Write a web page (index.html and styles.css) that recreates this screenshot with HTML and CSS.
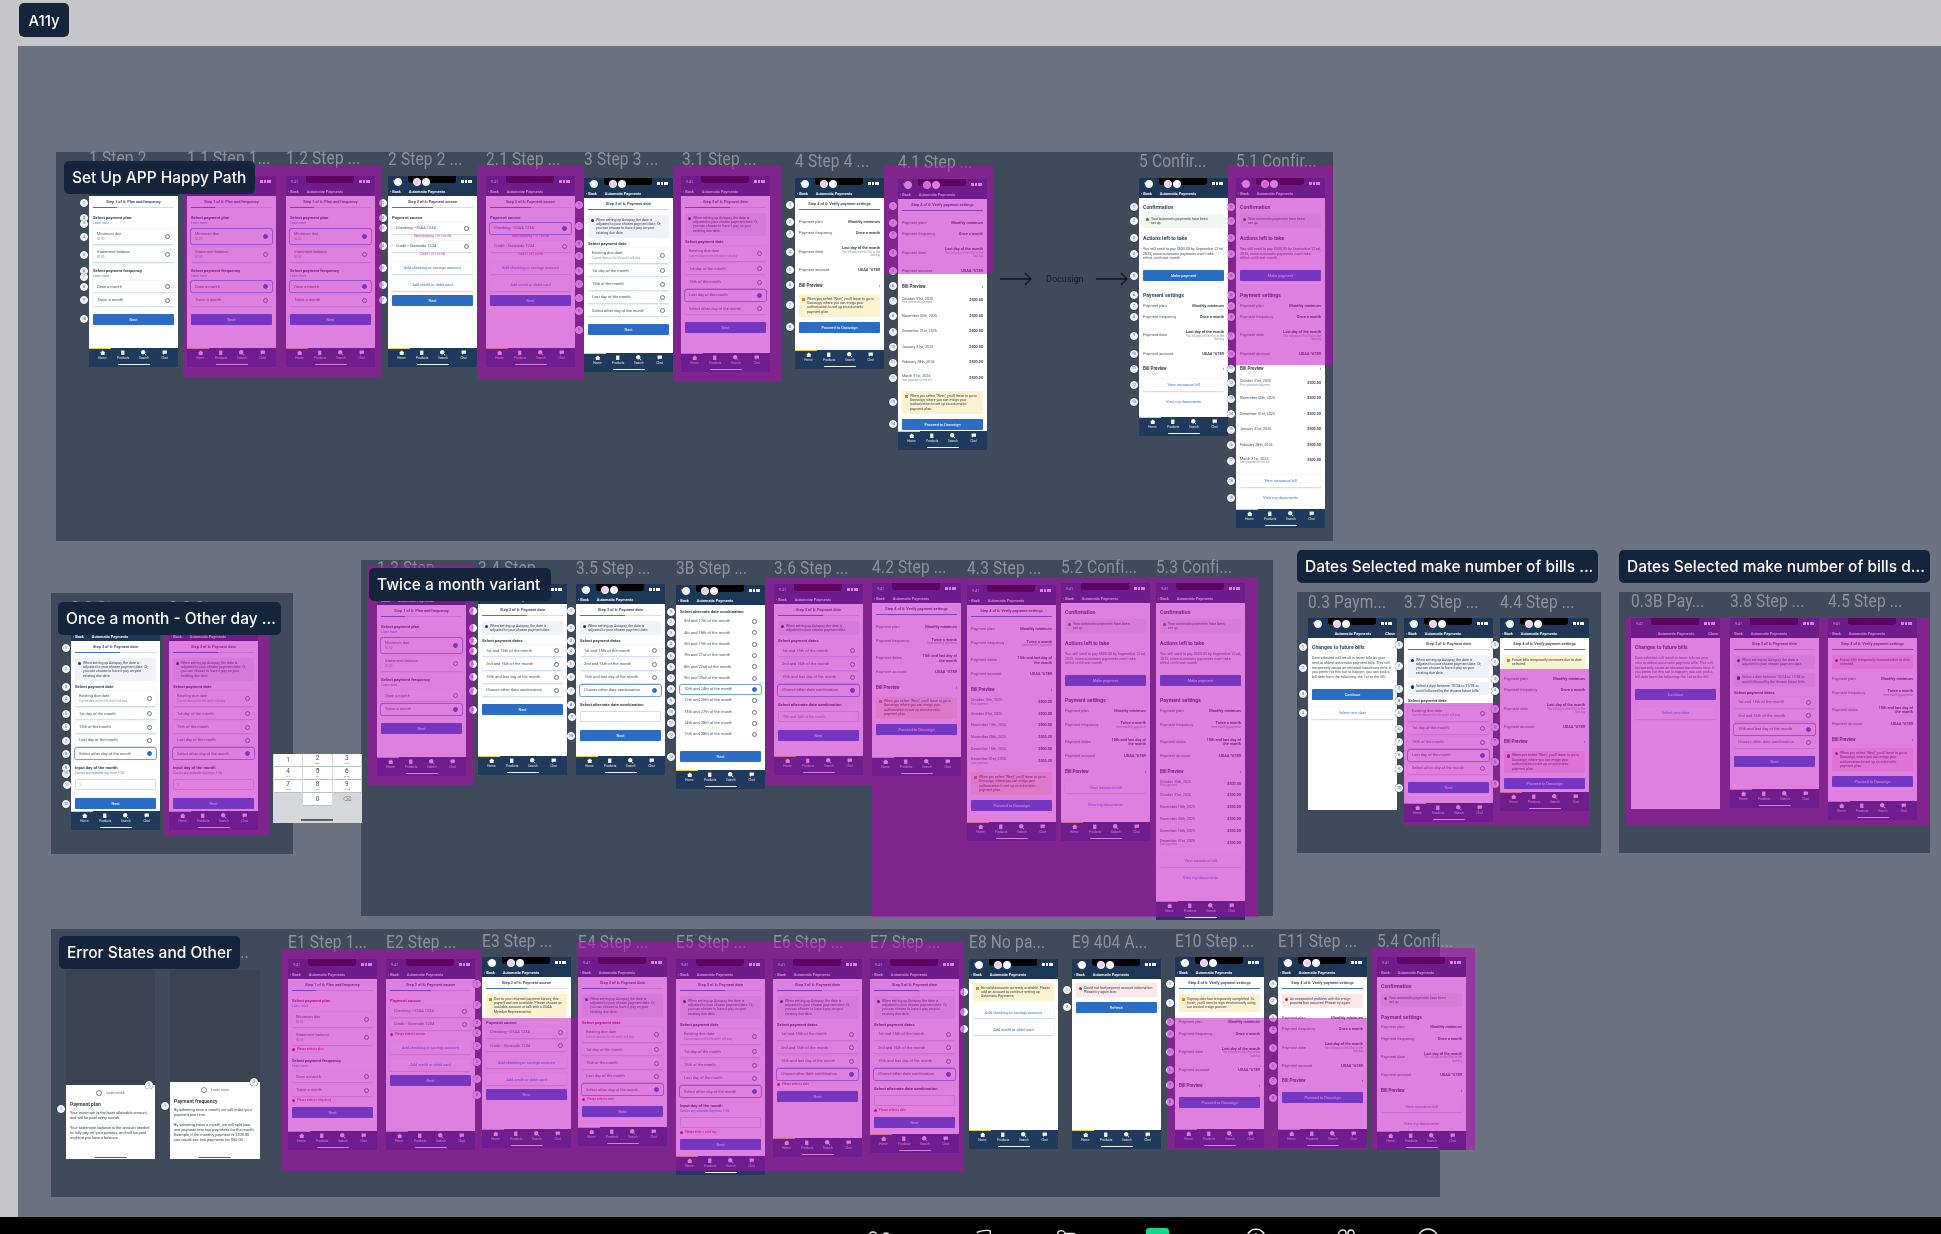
FILE: index.html
```html
<!DOCTYPE html>
<html lang="en">
<head>
<meta charset="utf-8">
<title>A11y</title>
<link rel="stylesheet" href="styles.css">
</head>
<body>
<header class="topbar"><span class="pagetag">A11y</span></header>
<main class="workspace">
  <div class="canvas" id="canvas"></div>
</main>
<footer class="dock">
  <svg class="dk dk1" viewBox="0 0 28 20"><circle cx="8" cy="8" r="4"/><circle cx="21" cy="8" r="3"/><path d="M1 20c0-6 3-8 7-8s7 2 7 8M17 12c5-1 9 2 10 8"/></svg>
  <svg class="dk dk2" viewBox="0 0 20 20"><path d="M2 4c3-2 12-3 15-2v16H4V6"/></svg>
  <svg class="dk dk3" viewBox="0 0 24 20"><path d="M2 20V5c0-2 2-3 4-3s3 1 4 3h8c3 0 4 2 4 4v11"/></svg>
  <span class="dk dk4"></span>
  <svg class="dk dk5" viewBox="0 0 20 20"><circle cx="10" cy="10" r="9"/><path d="M10 5v10"/></svg>
  <svg class="dk dk6" viewBox="0 0 20 20"><path d="M2 20V9c0-4 2-7 5-7s3 2 3 5M12 20V5c0-2 1-3 3-3s3 1 3 4v14"/></svg>
  <svg class="dk dk7" viewBox="0 0 22 20"><circle cx="11" cy="11" r="10"/></svg>
</footer>
<script src="app.js"></script>
</body>
</html>
```
FILE: styles.css
```css
* { box-sizing: border-box; }
html, body { margin: 0; height: 100%; overflow: hidden; }
body {
  width: 1941px; height: 1234px;
  display: grid; grid-template-rows: 46px 1171px 17px;
  background: #c6c6c8;
  font-family: "Inter", "Liberation Sans", sans-serif;
}
.topbar { display: flex; align-items: flex-start; padding: 3px 0 0 19px; filter: blur(.5px); }
.pagetag {
  display: flex; align-items: center; justify-content: center;
  width: 50px; height: 34px; border-radius: 5px;
  background: #14243a; color: #fff; font-size: 15px; font-weight: 500;
}
.workspace { padding-left: 18px; }
.canvas {
  position: relative; width: 100%; height: 100%; overflow: hidden;
  background: #6b7280;
  filter: blur(.6px);
}

/* frames on the free canvas */
.section { position: absolute; background: #3f4a5a; }
.flabel {
  position: absolute; height: 22px; line-height: 22px; white-space: nowrap;
  font-family: "Roboto", "Liberation Sans", sans-serif;
  font-size: 18px; color: #8d949f; letter-spacing: .2px;
  transform: scaleX(.86); transform-origin: left center;
}
.tint { position: absolute; background: rgba(192, 0, 192, .5); z-index: 5; }
.tag {
  position: absolute; z-index: 6; display: flex; align-items: center;
  height: 33px; padding: 0 8px; border-radius: 5px;
  background: #14243a; color: #fff; font-size: 15.5px; font-weight: 500; white-space: nowrap;
}
.flow { position: absolute; display: flex; align-items: center; color: #141a24; font-family: "Roboto", "Liberation Sans", sans-serif; font-size: 9px; z-index: 2; }
.flow span { width: 33px; margin: 0 17px 0 14px; white-space: nowrap; }
.flow svg { flex: none; width: 32px; height: 14px; stroke: #10151d; stroke-width: 1.3; fill: none; }

/* phone */
.phone {
  position: absolute; width: 89px; display: flex; flex-direction: column;
  font-family: "Roboto", "Liberation Sans", sans-serif; color: #2b3644;
}
.ph-head { height: 20px; background: #1d3857; color: #fff; position: relative; flex: none; }
.ph-status { height: 11px; display: flex; justify-content: space-between; align-items: center; padding: 0 5px; font-size: 3.6px; }
.ph-notch { position: absolute; left: 20px; top: 0; width: 48px; height: 7px; border-radius: 0 0 3px 3px; background: #000; }
.ph-sig { display: flex; gap: 1px; align-items: center; }
.ph-sig i { display: block; width: 2.5px; height: 2.5px; background: #fff; }
.ph-sig i:last-child { width: 4px; }
.ph-nav { height: 9px; display: flex; align-items: center; gap: 8px; padding: 0 2px; font-size: 3.9px; font-weight: 600; }
.ph-nav b { font-weight: 600; }
.ph-nav .spring { margin-left: auto; padding-right: 6px; }
.hd {
  position: absolute; top: 1.5px; width: 8px; height: 8px; border-radius: 50%;
  background: #f4f6fa; border: 1px solid #fff; box-shadow: 0 0 1px #4a5668;
}
.hd.a { left: 6px; }
.hd.b { left: 25px; background: #f1c8ee; }
.hd.c { left: 34px; }
.ph-body { flex: 1; min-height: 0; background: #fff; padding: 0 4px; position: relative; }
.ph-tabs {
  height: 19px; flex: none; background: #1f3a5c; position: relative;
  display: flex; justify-content: space-around; padding: 2px 3px 0; color: #dde5ef; font-size: 3.1px;
}
.ph-tabs::before { content: ""; position: absolute; left: 0; top: 0; width: 22px; height: 1px; background: #e8cf4a; }
.ph-tabs::after { content: ""; position: absolute; left: 29px; bottom: 2px; width: 32px; height: 1.5px; border-radius: 1px; background: #f2f5f9; }
.tab { display: flex; flex-direction: column; align-items: center; gap: .5px; width: 14px; }
.tab svg { width: 5.5px; height: 5.5px; fill: #f2f5f9; }

/* phone rows */
.row { position: relative; }
.dot {
  position: absolute; left: -13px; top: 50%; transform: translateY(-50%);
  width: 8px; height: 8px; border-radius: 50%; border: 1px solid #fff;
  background: #e9eef6; box-shadow: 0 0 1px #36414f;
  display: flex; align-items: center; justify-content: center;
  font-size: 3.4px; font-style: normal; color: #3d6696;
}
.r-step { height: 13px; padding-top: 3px; text-align: center; font-size: 3.9px; font-weight: 600; color: #3a4452; }
.r-step .bar { position: absolute; left: 0; right: 0; bottom: 1px; height: 1px; background: #d4dbe5; }
.r-step .bar i { display: block; height: 100%; background: #3f78c6; }
.r-h { height: 6px; margin-top: 6px; line-height: 6px; font-size: 4.2px; font-weight: 700; color: #39434f; white-space: nowrap; }
.r-h.big { font-size: 5.2px; margin-top: 8px; }
.r-h.big:first-child { margin-top: 6px; }
.r-h.err { color: #c2185b; }
.r-h.flush { margin-top: 4px; }
.r-banner + .r-h { margin-top: 3px; }
.r-banner + .r-h.big { margin-top: 7px; }
.r-btn + .r-h.big { margin-top: 11px; }
.r-sub { height: 5px; line-height: 5px; font-size: 3.2px; color: #4f86c9; }
.r-card, .r-opt, .r-plain {
  display: flex; align-items: center; justify-content: space-between;
  padding: 0 4px; font-size: 4px; color: #48525f;
  border-radius: 1.5px;
}
.r-card { height: 15px; margin-top: 3px; box-shadow: 0 .5px 1.5px #c8d0da; }
.r-opt { height: 11px; margin-top: 2.3px; box-shadow: 0 .5px 1.5px #d0d7e0; white-space: nowrap; }
.r-h + .r-card, .r-h + .r-opt { margin-top: 1.5px; }
.r-plain { height: 9.3px; margin-top: 2px; white-space: nowrap; }
.sel { box-shadow: 0 0 0 .7px #4f86c9, 0 0 2px #a8c4e6; }
.txt { display: flex; flex-direction: column; line-height: 4.6px; overflow: hidden; }
.txt small { font-size: 2.9px; color: #8a94a2; }
.radio { flex: none; width: 5px; height: 5px; border-radius: 50%; border: .7px solid #6d7885; position: relative; }
.sel .radio { border-color: #2b6cc4; background: #2b6cc4; }
.r-btn {
  height: 11px; margin-top: 8px; border-radius: 1px; background: #2b6cc4; color: #e8f0fa;
  display: flex; align-items: center; justify-content: center; font-size: 3.9px; font-weight: 500;
}
.r-btn.tight { margin-top: 4px; }
.r-btn.far { margin-top: 12px; }
.r-banner + .r-btn { margin-top: 5px; }
.r-para + .r-btn { margin-top: 9px; }
.r-link {
  height: 12px; margin-top: 5px; display: flex; align-items: center; justify-content: center;
  font-size: 3.9px; color: #3a76c4; box-shadow: 0 .5px 1.5px #cdd5df; border-radius: 1.5px; white-space: nowrap;
}
.r-btn + .r-link { margin-top: 7px; }
.r-prev + .r-link { margin-top: 6.5px; }
.r-link.bare { box-shadow: none; }
.r-banner { margin-top: 4px; padding: 2.5px 3px 2.5px 8px; font-size: 3.5px; line-height: 4.4px; color: #3a4452; border-radius: 1px; }
.r-banner::before { content: ""; position: absolute; left: 3px; top: 3.5px; width: 3.4px; height: 3.4px; border-radius: 50%; background: #25364e; }
.r-banner.info { background: #eff3f9; }
.r-banner.warn { background: #fcf2cf; }
.r-banner.warn::before { background: #d08a1d; border-radius: 0; }
.r-banner.bad { background: #fbe6e8; }
.r-banner.bad::before { background: #c8203f; }
.r-banner.ok { background: #eef6ee; padding-right: 14px; }
.r-banner.ok::before { background: #3c7a33; }
.r-prev + .r-banner { margin-top: 5.5px; }
.r-kv { display: flex; justify-content: space-between; gap: 4px; margin-top: 3px; min-height: 8.5px; font-size: 3.9px; line-height: 4.6px; color: #48525f; align-items: center; }
.r-step + .r-kv { margin-top: 7px; }
.r-h + .r-kv { margin-top: 3.5px; }
.r-banner + .r-kv { margin-top: 6px; }
.r-kv span { flex: none; }
.r-kv b { font-weight: 600; text-align: right; color: #2e3844; max-width: 38px; }
.r-kv small { display: block; font-size: 2.8px; line-height: 3.4px; color: #8a94a2; font-weight: 400; }
.r-kv.mid { min-height: 14px; }
.r-kv.tall { min-height: 22px; }
.r-bill { display: flex; justify-content: space-between; align-items: center; gap: 4px; margin-top: 3.5px; min-height: 12px; font-size: 3.7px; line-height: 4.6px; color: #48525f; }
.r-bill span { max-width: 36px; }
.r-bill.line { min-height: 8.3px; }
.r-bill.line span { max-width: none; white-space: nowrap; }
.r-prev + .r-bill { margin-top: 5px; }
.r-bill + .r-banner { margin-top: 7px; }
.r-bill + .r-link { margin-top: 8px; }
.r-bill b { font-weight: 600; color: #2e3844; }
.r-bill small { display: block; font-size: 2.8px; line-height: 3.4px; color: #8a94a2; white-space: nowrap; }
.r-prev { display: flex; justify-content: space-between; height: 7px; margin-top: 7px; font-size: 4.5px; line-height: 7px; font-weight: 700; color: #39434f; }
.r-note { height: 4.5px; margin-top: .5px; font-size: 3px; line-height: 4.5px; color: #d43a9e; text-align: center; white-space: nowrap; }
.r-err { height: 5px; margin-top: 2px; font-size: 3px; line-height: 5px; color: #d0174f; padding-left: 5px; white-space: nowrap; }
.r-err::before { content: ""; position: absolute; left: 0; top: 1px; width: 3px; height: 3px; border-radius: 50%; background: #d0174f; }
.r-para { margin-top: 6px; font-size: 3.7px; line-height: 4.8px; color: #48525f; }
.r-input { height: 11px; margin-top: 3px; border: .5px solid #d4dbe5; border-radius: 1px; display: flex; align-items: center; justify-content: space-between; padding: 0 3px; font-size: 3.6px; color: #7a8592; }

/* bottom sheet */
.sheet { position: absolute; width: 89px; background: #fff; padding: 2px 4px 0; color: #39434f; font-family: "Roboto", "Liberation Sans", sans-serif; }
.sheet-scrim { position: absolute; width: 89px; background: #3a4451; }
.sheet-top { display: flex; align-items: center; justify-content: center; gap: 4px; height: 12px; font-size: 3.6px; color: #5c6673; }
.sheet-top i { width: 6px; height: 6px; border-radius: 50%; border: .6px solid #7a8592; }
.sheet h5 { margin: 2px 0 4px; font-size: 5px; font-weight: 700; }
.sheet p { margin: 0 0 5px; font-size: 3.9px; line-height: 4.9px; }
.sheet .grip { position: absolute; left: 29px; bottom: 1px; width: 32px; height: 1.4px; background: #555f6c; }
.sheet .dot { left: -9px; top: 20px; transform: none; }
.sheet .dot.x { left: auto; right: 2px; top: -4px; }

/* keypad */
.keypad {
  position: absolute; width: 89px; height: 69px; background: #d5d7da; padding: 0 1px;
  display: grid; grid-template-columns: repeat(3, 1fr); grid-auto-rows: 13px; gap: 0 1px;
  font-family: "Roboto", "Liberation Sans", sans-serif;
}
.key { background: #fff; display: flex; flex-direction: column; align-items: center; justify-content: center; font-size: 6.5px; line-height: 6.5px; color: #444d59; border-bottom: .5px solid #b9bdc3; }
.key small { font-size: 2.4px; line-height: 3px; color: #6a727d; }
.key.none { background: transparent; border: 0; color: #7c838d; font-size: 6px; }
.keypad::after { content: ""; position: absolute; left: 28px; bottom: 2px; width: 32px; height: 2px; background: #5a606a; }

/* dock */
.dock { background: #000; overflow: hidden; position: relative; display: flex; align-items: flex-start; padding: 11px 0 0 865px; }
.dk { flex: none; height: 20px; fill: none; stroke: #e8e8e8; stroke-width: 1.5; }
.dk1 { width: 28px; }
.dk2 { width: 18px; margin-left: 82px; }
.dk3 { width: 22px; margin-left: 63px; }
.dk4 { width: 23px; margin-left: 68px; background: #10d98a; border-radius: 3px; }
.dk5 { width: 20px; margin-left: 77px; }
.dk6 { width: 20px; margin-left: 70px; }
.dk7 { width: 22px; margin-left: 61px; }
```
FILE: app.js
```js
/* Free-canvas board: every frame is a record of page coordinates. */
const OX = 18, OY = 46;
const canvas = document.getElementById('canvas');
let out = '';
const box = (c, x, y, w, h, html = '') =>
  `<div class="${c}" style="left:${x - OX}px;top:${y - OY}px;width:${w}px;height:${h}px">${html}</div>`;

/* rows */
const D = '@D';
const step = (t, p) => `<div class="row r-step">${D}${t}<div class="bar"><i style="width:${p}%"></i></div></div>`;
const h = (t, c = '') => `<div class="row r-h ${c}">${D}${t}</div>`;
const sub = t => `<div class="row r-sub">${D}${t}</div>`;
const lab = (a, b) => `<span class="txt">${a}${b ? `<small>${b}</small>` : ''}</span><i class="radio"></i>`;
const card = (a, b, s) => `<div class="row r-card ${s ? 'sel' : ''}">${D}${lab(a, b)}</div>`;
const opt = (a, s) => `<div class="row r-opt ${s ? 'sel' : ''}">${D}${lab(a)}</div>`;
const plain = (a, s) => `<div class="row r-plain ${s ? 'sel' : ''}">${D}${lab(a)}</div>`;
const btn = (t = 'Next', c = '') => `<div class="row r-btn ${c}">${D}${t}</div>`;
const link = (t, c = '') => `<div class="row r-link ${c}">${D}${t}</div>`;
const ban = (k, t) => `<div class="row r-banner ${k}">${D}${t}</div>`;
const kv = (a, b, c = '') => `<div class="row r-kv ${c}">${D}<span>${a}</span><b>${b}</b></div>`;
const bill = (a, b, c = '') => `<div class="row r-bill ${c}">${D}<span>${a}</span><b>${b}</b></div>`;
const prev = () => `<div class="row r-prev">${D}<span>Bill Preview</span><span>›</span></div>`;
const note = t => `<div class="row r-note">${t}</div>`;
const err = t => `<div class="row r-err">${t}</div>`;
const para = t => `<div class="row r-para">${D}${t}</div>`;
const input = (t = '', c = '') => `<div class="row r-input">${D}<span>${t}</span><span>${c}</span></div>`;

/* shared copy */
const INFO = 'When setting up Autopay, the date is adjusted to your chosen payment date. Or, you can choose to have it pay on your existing due date.';
const INFO2 = 'When setting up Autopay, the date is adjusted to your chosen payment date.';
const RANGE = 'Select a date between 10/24 to 11/03 to avoid followed by the chosen future bills.';
const DOCU = 'When you select "Next," you\'ll leave to go to Docusign, where you can e-sign your authorization to set up an automatic payment plan.';
const PAYSOON = 'You still need to pay $500.00 by September 22nd, 2025, since automatic payments won\'t take effect until next month.';
const WHEN = '<small>You will pay on the 31st, or the last day</small>';
const OT = 'Step 3 of 6: Payment date';
const ST = 'Step 4 of 6: Verify payment settings';
const CHANGE = 'Date selected will result in fewer bills as your next or oldest automatic payment bills. This will temporarily cause an elevated transitions time. If you prefer for this not to happen, you can pick a bill date from the following: the 1st or the 5th.';

const plan = (a, b) => [step('Step 1 of 6: Plan and frequency', 30), h('Select payment plan'), sub('Learn more'),
  card('Minimum due', '$0.00', a === 1), card('Statement balance', '$0.00', a === 2),
  h('Select payment frequency'), sub('Learn more'), opt('Once a month', b === 1), opt('Twice a month', b === 2), btn()];
const source = (a) => [step('Step 2 of 6: Payment source', 50), h('Payment source'),
  opt('Checking - USAA 1234', a === 1), note('Debit/checking 1 of 3 on file'), opt('Credit - Stateside 1234', a === 2), note('Credit 2 of 3 on file'),
  link('Add checking or savings account'), link('Add credit or debit card'), btn('Next', 'tight')];
const dayOpts = s => [card('Existing due date', 'Current date on the file and it will stay', s === 0),
  opt('1st day of the month', s === 1), opt('15th of the month', s === 2), opt('Last day of the month', s === 3), opt('Select other day of the month', s === 4)];
const dates = s => [step(OT, 55), ban('info', INFO), h('Select payment date'), ...dayOpts(s), btn()];
const other = () => [step(OT, 55), ban('info', INFO), h('Select payment date'), ...dayOpts(4), h('Input day of the month'), sub('Can be any calendar day from 1-28'), input('1'), btn()];
const twiceOpts = s => [opt('1st and 15th of the month', s === 0), opt('2nd and 16th of the month', s === 1), opt('15th and last day of the month', s === 2), opt('Choose other date combination', s === 3)];
const twice = (s, extra) => [step(OT, 55), ban('info', INFO2), h('Select payment dates'), ...twiceOpts(s), ...(extra ? [h('Select alternate date combination'), input(extra, '›')] : []), btn()];
const fOnce = () => kv('Payment frequency', 'Once a month');
const fTwice = () => kv('Payment frequency', 'Twice a month<small>Semi-monthly payments</small>', 'mid');
const dOnce = () => kv('Payment date', `Last day of the month${WHEN}`, 'tall');
const dTwice = () => kv('Payment dates', '15th and last day of the month', 'mid');
const acct = () => kv('Payment account', 'USAA *6789');
const planKv = () => kv('Payment plan', 'Monthly minimum');
const verify = (freq, date, bills, warn) => [step(ST, 100), planKv(), freq, date, acct(), prev(), ...bills, ...(warn ? [ban('warn', warn)] : []), btn('Proceed to Docusign')];
const billsOnce = () => [bill('October 31st, 2025<small>First automatic payment</small>', '$500.00'), bill('November 30th, 2025', '$500.00'), bill('December 31st, 2025', '$500.00'), bill('January 31st, 2026', '$500.00'), bill('February 28th, 2026', '$500.00'), bill('March 31st, 2026<small>Last payment in this bill</small>', '$500.00')];
const billsShort = () => [bill('October 15th, 2025<small>First payment</small>', '$500.00', 'line'), bill('October 31st, 2025', '$500.00', 'line'), bill('November 15th, 2025', '$500.00', 'line'), bill('November 30th, 2025', '$500.00', 'line'), bill('December 15th, 2025', '$500.00', 'line'), bill('December 31st, 2025<small>Last payment</small>', '$500.00', 'line')];
const confirm = (full, freq, date, bills) => [h('Confirmation', 'big'), ban('ok', 'Your automatic payments have been set up.'),
  ...(full ? [h('Actions left to take', 'big'), para(PAYSOON), btn('Make payment')] : []),
  h('Payment settings', 'big'), planKv(), freq || fOnce(),
  date || dOnce(), acct(), prev(), ...(bills || []), link('View insurance bill'), link('View my documents', 'bare')];

/* phones: records of x, body top, body bottom, flags, rows */
const phones = [
  [89, 196, 348, 'D', plan()], [187, 196, 348, '', plan(1, 1)], [286, 196, 348, '', plan(1, 1)],
  [388, 196, 348, 'D', source()], [486, 196, 348, '', source(1)], [584, 198, 353, 'D', dates()],
  [681, 196, 353, '', dates(3)], [795, 198, 350, 'D', verify(fOnce(), dOnce(), [], DOCU)],
  [898, 199, 431, 'D', verify(fOnce(), dOnce(), billsOnce(), DOCU)],
  [1139, 198, 417, 'D', confirm(true)], [1236, 198, 509, 'D', confirm(true, null, null, billsOnce())],

  [71, 641, 811, 'D', other()], [169, 641, 811, '', other()],

  [377, 605, 757, '', plan(1, 2)], [478, 604, 756, 'D', twice()], [576, 604, 756, 'D', twice(3, ' ')],
  [676, 605, 770, 'D', [h('Select alternate date combination', 'flush'),
    plain('3rd and 17th of the month'), plain('4th and 18th of the month'), plain('5th and 19th of the month'), plain('7th and 21st of the month'), plain('8th and 22nd of the month'), plain('9th and 23rd of the month'), plain('10th and 24th of the month', 1), plain('12th and 26th of the month'), plain('13th and 27th of the month'), plain('14th and 28th of the month'), plain('15th and 28th of the month'), btn('Next', 'far')]],
  [774, 604, 756, '', twice(3, '10th and 24th of the month')],
  [872, 603, 757, '', verify(fTwice(), dTwice(), [], DOCU)],
  [967, 605, 822, '', verify(fTwice(), dTwice(), billsShort(), DOCU)],
  [1061, 603, 822, '', confirm(true, fTwice(), dTwice())], [1156, 603, 901, '', confirm(true, fTwice(), dTwice(), billsShort())],

  [1308, 638, 810, 'DNT', [h('Changes to future bills', 'big'), para(CHANGE), btn('Continue'), link('Select new date')]],
  [1404, 638, 803, 'D', [step(OT, 55), ban('info', INFO), ban('info', RANGE), h('Select payment date'), ...dayOpts(3), btn()]],
  [1500, 638, 792, 'D', [step(ST, 100), ban('warn', 'Future bills temporarily increases due to date selected.'), planKv(), fOnce(), dOnce(), acct(), prev(), ban('bad', DOCU), btn('Proceed to Docusign')]],
  [1631, 638, 809, 'NT', [h('Changes to future bills', 'big'), para(CHANGE), btn('Continue'), link('Select new date')]],
  [1730, 638, 789, '', [step(OT, 55), ban('info', INFO2), ban('info', RANGE), h('Select payment dates'), ...twiceOpts(2), btn()]],
  [1828, 638, 801, '', [step(ST, 100), ban('bad', 'Future bills temporarily increases due to date selected.'), planKv(), fTwice(), dTwice(), acct(), prev(), ban('bad', DOCU), btn('Proceed to Docusign')]],

  [288, 979, 1131, '', [step('Step 1 of 6: Plan and frequency', 30), h('Select payment plan', 'err'), sub('Learn more'), card('Minimum due', '$0.00'), card('Statement balance', '$0.00'), err('Please select a plan'), h('Select payment frequency'), sub('Learn more'), opt('Once a month'), opt('Twice a month'), err('Please select a frequency'), btn('Next', 'tight')]],
  [386, 979, 1131, '', [step('Step 2 of 6: Payment source', 50), h('Payment source', 'err'), opt('Checking - USAA 1234'), opt('Credit - Stateside 1234'), err('Please select a source'), link('Add checking or savings account'), link('Add credit or debit card'), btn('Next', 'tight')]],
  [482, 977, 1129, 'D', [step('Step 2 of 6: Payment source', 50), ban('warn', 'Due to your returned payment history, this pay-off and one available. Please choose an available account or talk with a USAA Member Representative.'), h('Payment source'), opt('Checking - USAA 1234'), opt('Credit - Stateside 1234'), link('Add checking or savings account'), link('Add credit or debit card'), btn('Next', 'tight')]],
  [578, 977, 1127, '', [step(OT, 55), ban('info', INFO), h('Select payment date', 'err'), ...dayOpts(4), err('Please select a date'), btn('Next', 'tight')]],
  [676, 979, 1156, '', [step(OT, 55), ban('info', INFO), h('Select payment date'), ...dayOpts(4), h('Input day of the month'), sub('Can be any calendar day from 1-28'), input(), err('Please enter a valid day'), btn('Next', 'tight')]],
  [773, 979, 1138, '', [step(OT, 55), ban('info', INFO), h('Select payment dates'), ...twiceOpts(3), err('Please select a date'), btn('Next', 'tight')]],
  [870, 979, 1134, '', [step(OT, 55), ban('info', INFO), h('Select payment dates'), ...twiceOpts(3), h('Select alternate date combination'), input('', '›'), err('Please select a date'), btn('Next', 'tight')]],
  [969, 979, 1130, 'D', [ban('warn', 'No valid accounts currently available. Please add an account to continue setting up Automatic Payments.'), link('Add checking or savings account'), link('Add credit or debit card')]],
  [1072, 979, 1130, 'D', [ban('bad', 'Could not find payment account information. Please try again later.'), btn('Refresh', 'tight')]],
  [1175, 977, 1129, 'D', [step(ST, 100), ban('warn', 'Signing date has temporarily completed. To finish, you\'ll need to sign electronically using our trusted e-sign partner.'), planKv(), fOnce(), dOnce(), acct(), prev(), btn('Proceed to Docusign')]],
  [1278, 977, 1129, 'D', [step(ST, 100), ban('bad', 'An unexpected problem with the e-sign process has occurred. Please try again.'), planKv(), fOnce(), dOnce(), acct(), prev(), btn('Proceed to Docusign')]],
  [1377, 977, 1131, '', confirm(false)],
];

const icons = [
  '<svg viewBox="0 0 10 10"><path d="M5 1 0 5h1.5v4h7V5H10z"/></svg>',
  '<svg viewBox="0 0 10 10"><path d="M2 1h6v8H2z"/></svg>',
  '<svg viewBox="0 0 10 10"><path d="M4 0a4 4 0 1 0 2.4 7.2L9 10l1-1-2.8-2.6A4 4 0 0 0 4 0z"/></svg>',
  '<svg viewBox="0 0 10 10"><path d="M1 1h8v6H4L2 9V7H1z"/></svg>',
];
const tabNames = ['Home', 'Products', 'Search', 'Chat'];

function phoneHtml([x, top, bottom, flags, rows]) {
  const dots = flags.includes('D'), noTabs = flags.includes('N'), close = flags.includes('T');
  let n = 0;
  const body = rows.join('').replace(/@D/g, () => dots ? `<i class="dot">${++n}</i>` : '');
  const head = `<div class="ph-head"><div class="ph-status"><span>9:41</span><span class="ph-sig"><i></i><i></i><i></i></span></div><div class="ph-notch"></div>
    <div class="ph-nav">${close ? '<b class="spring">Automatic Payments</b><span>Close</span>' : '<span>‹ Back</span><b>Automatic Payments</b>'}</div>
    ${dots ? '<i class="hd a"></i><i class="hd b"></i><i class="hd c"></i>' : ''}</div>`;
  const tabs = noTabs ? '' : `<div class="ph-tabs">${tabNames.map((t, i) => `<span class="tab">${icons[i]}${t}</span>`).join('')}</div>`;
  const h2 = bottom - top + 20 + (noTabs ? 0 : 19);
  return `<div class="phone" style="left:${x - OX}px;top:${top - 20 - OY}px;height:${h2}px">${head}<div class="ph-body">${body}</div>${tabs}</div>`;
}

/* sections */
[[56, 152, 1277, 389], [51, 593, 242, 261], [361, 560, 912, 356], [1297, 592, 304, 261], [1619, 592, 311, 261], [51, 929, 1389, 268]]
  .forEach(s => { out += box('section', ...s); });

/* frame labels */
[[89, 158, '1 Step 2 ...'], [187, 158, '1.1 Step 1...'], [286, 158, '1.2 Step ...'], [388, 159, '2 Step 2 ...'], [486, 159, '2.1 Step ...'], [584, 159, '3 Step 3 ...'], [682, 159, '3.1 Step ...'], [795, 161, '4 Step 4 ...'], [898, 162, '4.1 Step ...'], [1139, 161, '5 Confir...'], [1236, 161, '5.1 Confir...'],
 [71, 608, '0.2 Step ...'], [169, 608, '0.2 Step ...'],
 [377, 568, '1.3 Step ...'], [478, 568, '3.4 Step ...'], [576, 568, '3.5 Step ...'], [676, 568, '3B Step ...'], [774, 568, '3.6 Step ...'], [872, 567, '4.2 Step ...'], [967, 568, '4.3 Step ...'], [1061, 567, '5.2 Confi...'], [1156, 567, '5.3 Confi...'],
 [1308, 602, '0.3 Paym...'], [1404, 602, '3.7 Step ...'], [1500, 602, '4.4 Step ...'], [1631, 601, '0.3B Pay...'], [1730, 601, '3.8 Step ...'], [1828, 601, '4.5 Step ...'],
 [170, 952, 'Payment ...'], [288, 942, 'E1 Step 1...'], [386, 942, 'E2 Step ...'], [482, 941, 'E3 Step ...'], [578, 942, 'E4 Step ...'], [676, 942, 'E5 Step ...'], [773, 942, 'E6 Step ...'], [870, 942, 'E7 Step ...'], [969, 942, 'E8 No pa...'], [1072, 942, 'E9 404 A...'], [1175, 941, 'E10 Step ...'], [1278, 941, 'E11 Step ...'], [1377, 941, '5.4 Confi...']]
  .forEach(([x, y, t]) => { out += `<div class="flabel" style="left:${x - OX}px;top:${y - 11 - OY}px">${t}</div>`; });

phones.forEach(p => { out += phoneHtml(p); });

/* keypad */
out += box('keypad', 273, 754, 89, 69, [['1',''],['2','ABC'],['3','DEF'],['4','GHI'],['5','JKL'],['6','MNO'],['7','PQRS'],['8','TUV'],['9','WXYZ']].map(k => `<span class="key">${k[0]}<small>${k[1]}</small></span>`).join('') + '<span class="key none"></span><span class="key">0</span><span class="key none">⌫</span>');

/* bottom sheets */
out += box('sheet-scrim', 66, 970, 89, 115) + box('sheet-scrim', 170, 970, 90, 112);
out += box('sheet', 66, 1085, 89, 74, '<i class="dot">1</i><i class="dot x">2</i><div class="sheet-top"><i></i>Learn more</div><h5>Payment plan</h5><p>Your minimum is the least allowable amount, and will be paid every month.</p><p>Your statement balance is the amount needed to fully pay off your policies, and will be paid anytime you have a balance.</p><div class="grip"></div>');
out += box('sheet', 170, 1082, 90, 77, '<i class="dot">1</i><i class="dot x">2</i><div class="sheet-top"><i></i>Learn more</div><h5>Payment frequency</h5><p>By selecting once a month, we will make your payment one time.</p><p>By selecting twice a month, we will split your one payment into two payments for the month. Example, if the monthly payment is $100.00 you would see two payments for $50.00</p><div class="grip"></div>');

/* docusign hand-off */
const arrow = '<svg viewBox="0 0 32 14"><path d="M0 7h31M25 1l6 6-6 6"/></svg>';
out += `<div class="flow" style="left:${1000 - OX}px;top:${272 - OY}px">${arrow}<span>Docusign</span>${arrow}</div>`;

/* review tint */
[[183, 166, 199, 211], [477, 166, 107, 214], [673, 166, 108, 216], [884, 166, 109, 108], [1228, 166, 105, 199],
 [163, 603, 106, 233], [368, 565, 105, 220], [766, 577, 106, 208], [872, 577, 386, 340],
 [1404, 703, 96, 123], [1500, 669, 90, 157], [1626, 617, 303, 209],
 [281, 949, 201, 222], [482, 1018, 96, 153], [578, 942, 386, 229], [1167, 1018, 200, 132], [1372, 948, 103, 202]]
  .forEach(t => { out += box('tint', ...t); });

/* frame tags */
[[64, 161, 191, 'Set Up APP Happy Path'], [58, 602, 223, 'Once a month - Other day ...'], [369, 568, 182, 'Twice a month variant'],
 [1297, 550, 301, 'Dates Selected make number of bills ...'], [1619, 550, 311, 'Dates Selected make number of bills d...'], [59, 936, 181, 'Error States and Other']]
  .forEach(([x, y, w, t]) => { out += `<div class="tag" style="left:${x - OX}px;top:${y - OY}px;width:${w}px">${t}</div>`; });

canvas.innerHTML = out;
```
